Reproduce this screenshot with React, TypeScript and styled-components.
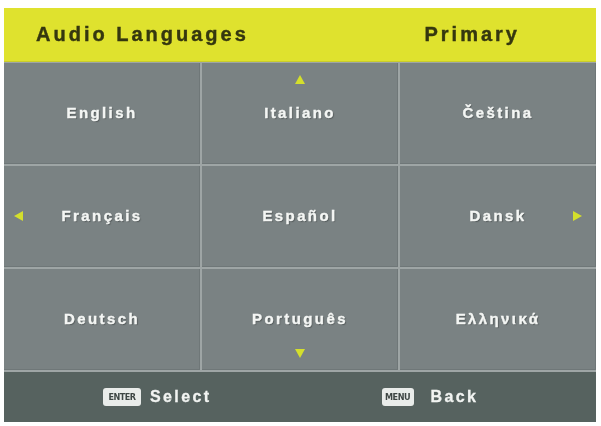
import styled, { createGlobalStyle } from "styled-components"

const GlobalStyle = createGlobalStyle`
	html, body {
		margin: 0;
		padding: 0;
		background: #ffffff;
	}
	body {
		font-family: "Liberation Sans", Arial, sans-serif;
	}
`

const Panel = styled.div`
	margin: 8px 0 0 4px;
	width: 592px;
	height: 414px;
	display: flex;
	flex-direction: column;
	background: #9aa1a1;
	filter: blur(0.4px);
`

const Header = styled.div`
	height: 54px;
	flex: none;
	display: flex;
	align-items: center;
	justify-content: space-between;
	padding: 0 76px 0 32px;
	background: #dfe22e;
	border-bottom: 1px solid #c9cc2a;
	box-sizing: border-box;
`

const HeaderTitle = styled.div`
	font-size: 20px;
	font-weight: bold;
	letter-spacing: 3px;
	color: #35370f;
	-webkit-text-stroke: 0.4px #35370f;
`

const Grid = styled.div`
	flex: 1;
	display: grid;
	grid-template-columns: repeat(3, 1fr);
	grid-template-rows: repeat(3, 1fr);
	gap: 2px;
	padding: 1px 0 2px;
	background: #9ea5a5;
`

const Cell = styled.div`
	position: relative;
	display: flex;
	align-items: center;
	justify-content: center;
	padding-bottom: 2px;
	background: #7a8283;
	box-shadow: inset -1px 0 0 #6f7778, inset 0 -1px 0 #6f7778;
	color: #f4f6f4;
	font-size: 15px;
	font-weight: bold;
	letter-spacing: 2.4px;
	-webkit-text-stroke: 0.4px #f4f6f4;
	text-shadow: 1px 1px 1px rgba(40, 45, 45, 0.45);
`

type Direction = "up" | "down" | "left" | "right"

const arrowPlace: Record<Direction, string> = {
	up: "top: 12px; left: 50%; margin-left: -5px;",
	down: "bottom: 12px; left: 50%; margin-left: -5px;",
	left: "top: 50%; left: 10px; margin-top: -6px;",
	right: "top: 50%; right: 14px; margin-top: -6px;",
}

const ArrowMark = styled.svg<{ $dir: Direction }>`
	position: absolute;
	width: 10px;
	height: 10px;
	${(p) => arrowPlace[p.$dir]}
`

const arrowPoints: Record<Direction, string> = {
	up: "5,0 10,9 0,9",
	down: "0,1 10,1 5,10",
	left: "9,0 9,10 0,5",
	right: "1,0 1,10 10,5",
}

const Arrow = ({ dir }: { dir: Direction }) => (
	<ArrowMark $dir={dir} viewBox="0 0 10 10">
		<polygon points={arrowPoints[dir]} fill="#d4df2c" />
	</ArrowMark>
)

const Footer = styled.div`
	height: 50px;
	flex: none;
	display: flex;
	align-items: center;
	gap: 170px;
	padding-left: 99px;
	background: #56625f;
	box-sizing: border-box;
`

const Hint = styled.div<{ $gap: number }>`
	display: flex;
	align-items: center;
	gap: ${(p) => p.$gap}px;
	color: #f2f4f2;
	font-size: 16px;
	font-weight: bold;
	letter-spacing: 2.4px;
	-webkit-text-stroke: 0.3px #f2f4f2;
`

const KeyCap = styled.span<{ $w: number }>`
	width: ${(p) => p.$w}px;
	height: 18px;
	display: flex;
	align-items: center;
	justify-content: center;
	background: #e9ecea;
	border-radius: 3px;
	color: #3e4644;
	-webkit-text-stroke: 0;
	font-family: "Liberation Sans Narrow", "DejaVu Sans Condensed", sans-serif;
	font-size: 9px;
	font-weight: bold;
	letter-spacing: -0.5px;
`

const languages: { name: string; arrow?: Direction }[] = [
	{ name: "English" },
	{ name: "Italiano", arrow: "up" },
	{ name: "Čeština" },
	{ name: "Français", arrow: "left" },
	{ name: "Español" },
	{ name: "Dansk", arrow: "right" },
	{ name: "Deutsch" },
	{ name: "Português", arrow: "down" },
	{ name: "Ελληνικά" },
]

export default function App() {
	return (
		<>
			<GlobalStyle />
			<Panel>
				<Header>
					<HeaderTitle>Audio Languages</HeaderTitle>
					<HeaderTitle>Primary</HeaderTitle>
				</Header>
				<Grid>
					{languages.map((lang) => (
						<Cell key={lang.name}>
							{lang.name}
							{lang.arrow && <Arrow dir={lang.arrow} />}
						</Cell>
					))}
				</Grid>
				<Footer>
					<Hint $gap={9}>
						<KeyCap $w={38}>ENTER</KeyCap>
						Select
					</Hint>
					<Hint $gap={17}>
						<KeyCap $w={32}>MENU</KeyCap>
						Back
					</Hint>
				</Footer>
			</Panel>
		</>
	)
}
